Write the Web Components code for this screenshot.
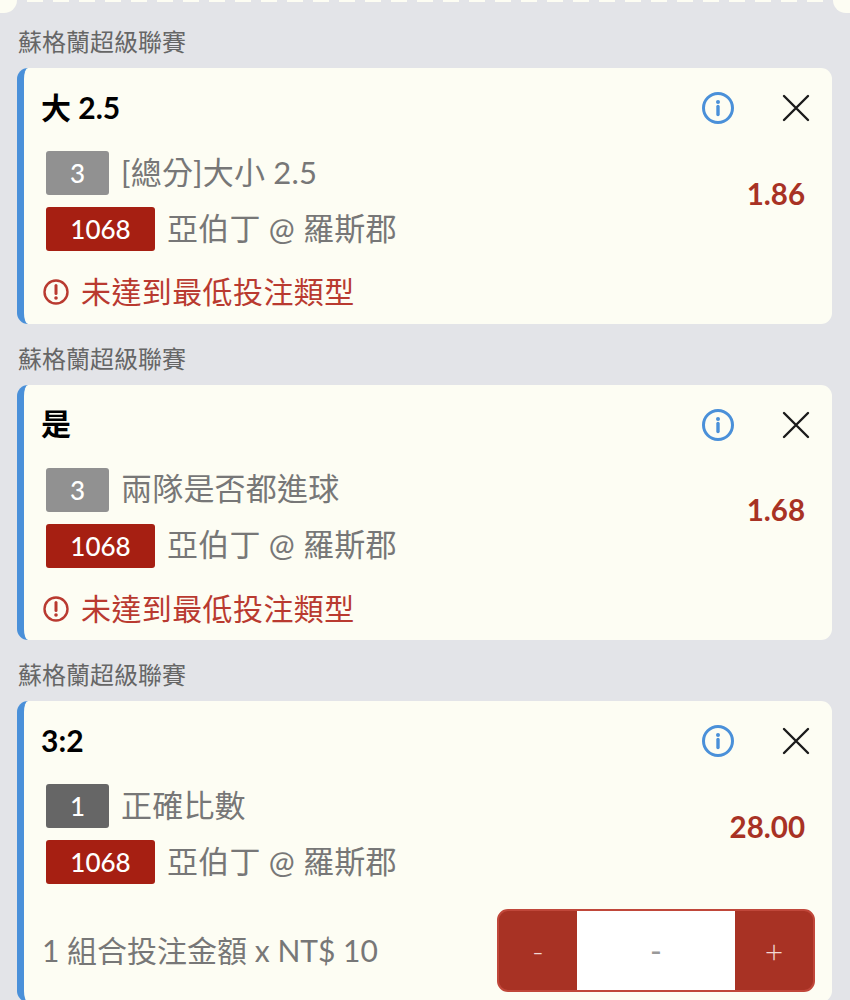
<!DOCTYPE html>
<html lang="zh-Hant">
<head>
<meta charset="utf-8">
<title>投注單</title>
<style>
    html, body {
        margin: 0;
        height: 1000px;
        overflow: hidden;
        background: #e3e4e8;
        font-family: Lato, "Noto Sans CJK TC", sans-serif;
    }
</style>
</head>
<body>
<bet-slip>
    <ticket-tail></ticket-tail>

    <bet-card league="蘇格蘭超級聯賽" pick="大 2.5" odds="1.86">
        <market-row kind="grey" num="3">[總分]大小 2.5</market-row>
        <market-row kind="red" num="1068">亞伯丁 @ 羅斯郡</market-row>
        <bet-warning slot="footer">未達到最低投注類型</bet-warning>
    </bet-card>

    <bet-card league="蘇格蘭超級聯賽" pick="是" odds="1.68">
        <market-row kind="grey" num="3">兩隊是否都進球</market-row>
        <market-row kind="red" num="1068">亞伯丁 @ 羅斯郡</market-row>
        <bet-warning slot="footer">未達到最低投注類型</bet-warning>
    </bet-card>

    <bet-card league="蘇格蘭超級聯賽" pick="3:2" odds="28.00">
        <market-row kind="dark" num="1">正確比數</market-row>
        <market-row kind="red" num="1068">亞伯丁 @ 羅斯郡</market-row>
        <stake-row slot="footer">1 組合投注金額 x NT$ 10</stake-row>
    </bet-card>
</bet-slip>

<script>
class BetSlip extends HTMLElement {
    constructor() {
        super()
        this.attachShadow({ mode: 'open' })
        this.shadowRoot.innerHTML = /*html*/`
            <style>
                :host {
                    display: flex;
                    flex-direction: column;
                }
            </style>
            <slot></slot>
        `
    }
}

// bottom edge of the ticket scrolled out above
class TicketTail extends HTMLElement {
    constructor() {
        super()
        this.attachShadow({ mode: 'open' })
        this.shadowRoot.innerHTML = /*html*/`
            <style>
                :host {
                    display: flex;
                    justify-content: space-between;
                    height: 13px;
                    margin-bottom: -6px;
                    position: relative;
                    overflow: hidden;
                }
                .corner {
                    width: 17px;
                    height: 13px;
                    background: #fdfdf3;
                }
                .left { border-bottom-right-radius: 14px; }
                .right { border-bottom-left-radius: 14px; }
                .dash {
                    flex-grow: 1;
                    height: 2px;
                    margin: 0 6px 0 10px;
                    background: repeating-linear-gradient(90deg, #fdfdf3 0 16px, transparent 16px 26px);
                }
            </style>
            <div class="corner left"></div>
            <div class="dash"></div>
            <div class="corner right"></div>
        `
    }
}

class BetCard extends HTMLElement {
    constructor() {
        super()
        this.attachShadow({ mode: 'open' })
        this.shadowRoot.innerHTML = /*html*/`
            <style>
                :host {
                    display: block;
                }
                .league {
                    height: 61px;
                    box-sizing: border-box;
                    padding: 19px 0 0 18px;
                    font-size: 24px;
                    line-height: 32px;
                    color: #666;
                }
                .card {
                    margin: 0 18px 0 17px;
                    box-sizing: border-box;
                    padding: 0 27px 9.5px 19px;
                    background: #fdfdf3;
                    border-left: 7px solid #4a90d9;
                    border-radius: 11px;
                    display: flex;
                    flex-direction: column;
                }
                .head {
                    height: 83px;
                    box-sizing: border-box;
                    padding-bottom: 3px;
                    flex-shrink: 0;
                    display: flex;
                    align-items: center;
                }
                .pick {
                    flex-grow: 1;
                    margin-top: -3px;
                    margin-left: -2px;
                    font-size: 30px;
                    line-height: 36px;
                    font-weight: 700;
                    color: #000;
                }
                .info {
                    width: 32px;
                    height: 32px;
                    margin-right: 48px;
                }
                .close {
                    width: 28px;
                    height: 28px;
                    margin-right: -5px;
                }
                .body {
                    display: flex;
                    align-items: center;
                    justify-content: space-between;
                }
                .rows {
                    display: flex;
                    flex-direction: column;
                    gap: 12px;
                    padding-left: 3px;
                }
                .odds {
                    padding-bottom: 16px;
                    font-size: 29.5px;
                    font-weight: 700;
                    color: #a83224;
                }
            </style>
            <div class="league"></div>
            <div class="card">
                <div class="head">
                    <div class="pick"></div>
                    <svg class="info" viewBox="0 0 32 32" fill="none" stroke="#4a90d9">
                        <circle cx="16" cy="16" r="14.5" stroke-width="3"/>
                        <circle cx="16" cy="10" r="2" fill="#4a90d9" stroke="none"/>
                        <path d="M16 14.5v8" stroke-width="3.4" stroke-linecap="round"/>
                    </svg>
                    <svg class="close" viewBox="0 0 28 28" fill="none" stroke="#1a1a1a" stroke-width="2.4" stroke-linecap="round">
                        <path d="M2 2l24 24M26 2L2 26"/>
                    </svg>
                </div>
                <div class="body">
                    <div class="rows"><slot></slot></div>
                    <div class="odds"></div>
                </div>
                <slot name="footer"></slot>
            </div>
        `
    }

    connectedCallback() {
        this.shadowRoot.querySelector('.league').textContent = this.getAttribute('league')
        this.shadowRoot.querySelector('.pick').textContent = this.getAttribute('pick')
        this.shadowRoot.querySelector('.odds').textContent = this.getAttribute('odds')
    }
}

class MarketRow extends HTMLElement {
    constructor() {
        super()
        this.attachShadow({ mode: 'open' })
        this.shadowRoot.innerHTML = /*html*/`
            <style>
                :host {
                    display: flex;
                    align-items: center;
                    gap: 12px;
                    height: 44px;
                    font-size: 31px;
                    color: #777;
                    white-space: nowrap;
                }
                .num {
                    height: 44px;
                    border-radius: 3px;
                    display: flex;
                    align-items: center;
                    justify-content: center;
                    font-size: 26px;
                    font-weight: 500;
                    color: #fff;
                }
                .text {
                    margin-top: -6px;
                    letter-spacing: 0.2px;
                }
                :host([kind="grey"]) .num { width: 63px; background: #919191; }
                :host([kind="dark"]) .num { width: 63px; background: #666; }
                :host([kind="red"]) .num { width: 109px; background: #a61f12; }
            </style>
            <span class="num"></span>
            <span class="text"><slot></slot></span>
        `
    }

    connectedCallback() {
        this.shadowRoot.querySelector('.num').textContent = this.getAttribute('num')
    }
}

class BetWarning extends HTMLElement {
    constructor() {
        super()
        this.attachShadow({ mode: 'open' })
        this.shadowRoot.innerHTML = /*html*/`
            <style>
                :host {
                    display: flex;
                    align-items: center;
                    gap: 12px;
                    height: 44px;
                    margin-top: 19px;
                    font-size: 30px;
                    letter-spacing: 0.4px;
                    line-height: 42px;
                    color: #b93a30;
                    white-space: nowrap;
                }
                svg {
                    width: 26px;
                    height: 26px;
                }
                .text {
                    margin-top: -2px;
                }
            </style>
            <svg viewBox="0 0 26 26" fill="none" stroke="#b93a30">
                <circle cx="13" cy="13" r="11.5" stroke-width="2.4"/>
                <path d="M13 6.5v8" stroke-width="3" stroke-linecap="round"/>
                <circle cx="13" cy="19" r="1.8" fill="#b93a30" stroke="none"/>
            </svg>
            <span class="text"><slot></slot></span>
        `
    }
}

class StakeRow extends HTMLElement {
    constructor() {
        super()
        this.attachShadow({ mode: 'open' })
        this.shadowRoot.innerHTML = /*html*/`
            <style>
                :host {
                    display: flex;
                    align-items: center;
                    justify-content: space-between;
                    margin-top: 25px;
                    font-size: 30px;
                    color: #777;
                    white-space: nowrap;
                }
                .label {
                    margin-top: -4px;
                    margin-left: -1px;
                }
                .stepper {
                    display: flex;
                    width: 318px;
                    height: 83px;
                    box-sizing: border-box;
                    border: 2px solid #c0473a;
                    border-radius: 11px;
                    overflow: hidden;
                    background: #a83224;
                    margin-right: -10px;
                    font-size: 32px;
                    color: #f2d9d5;
                }
                .stepper span {
                    display: flex;
                    align-items: center;
                    justify-content: center;
                    width: 78px;
                    font-weight: 300;
                }
                .stepper .value {
                    flex-grow: 1;
                    background: #fff;
                    color: #999;
                    font-weight: 400;
                }
            </style>
            <div class="label"><slot></slot></div>
            <div class="stepper">
                <span>-</span>
                <span class="value">-</span>
                <span>+</span>
            </div>
        `
    }
}

customElements.define('bet-slip', BetSlip)
customElements.define('ticket-tail', TicketTail)
customElements.define('bet-card', BetCard)
customElements.define('market-row', MarketRow)
customElements.define('bet-warning', BetWarning)
customElements.define('stake-row', StakeRow)
</script>
</body>
</html>
